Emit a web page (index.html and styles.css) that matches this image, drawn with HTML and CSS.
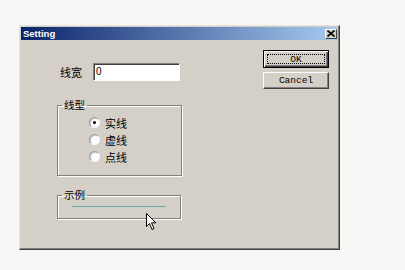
FILE: index.html
```html
<!DOCTYPE html>
<html>

<head>
    <meta charset='UTF-8'>
    <title>Setting</title>
    <link rel="stylesheet" href="styles.css">
</head>

<body>
    <div class='dialog'>
        <div class='title-bar'>
            <span class='title-text'>Setting</span>
            <span class='close-btn'>
                <svg width='8' height='7' viewBox='0 0 8 7'>
                    <path d='M0.5 0.5 L7.5 6.5 M7.5 0.5 L0.5 6.5' stroke='#000' stroke-width='1.6' />
                </svg>
            </span>
        </div>

        <div class='dialog-body'>
            <div class='left-col'>
                <!-- Line width -->
                <div class='field-row'>
                    <span class='field-label'>线宽</span>
                    <div class='text-input'>0</div>
                </div>

                <!-- Line type -->
                <fieldset class='group type-group'>
                    <legend>线型</legend>
                    <div class='radio-row'><span class='radio checked'></span><span>实线</span></div>
                    <div class='radio-row'><span class='radio'></span><span>虚线</span></div>
                    <div class='radio-row'><span class='radio'></span><span>点线</span></div>
                </fieldset>

                <!-- Preview -->
                <fieldset class='group sample-group'>
                    <legend>示例</legend>
                    <div class='sample-line'></div>
                </fieldset>
            </div>

            <div class='right-col'>
                <div class='btn default'><span class='focus-rect'>OK</span></div>
                <div class='btn'>Cancel</div>
            </div>
        </div>
    </div>

    <svg class='cursor' width='12' height='18' viewBox='0 0 12 18'>
        <path d='M0.5 0.5 L0.5 13.5 L3.5 10.5 L6 16.5 L8 15.5 L5.5 9.8 L9.8 9.8 Z' fill='#fff' stroke='#000' stroke-width='1' stroke-linejoin='miter' />
    </svg>
</body>

</html>
```

FILE: styles.css
```css
body {
    margin: 0;
    background-color: #f7f7f5;
    font-family: "Noto Sans CJK SC", "Liberation Sans", sans-serif;
    font-size: 11px;
    color: #000;
}

.dialog {
    width: 321px;
    height: 225px;
    margin: 25px 0 0 19px;
    box-sizing: border-box;
    padding: 1px;
    background: #d4d0c8;
    border: 1px solid;
    border-color: #e6e4de #404040 #404040 #e6e4de;
    box-shadow: inset -1px -1px 0 #808080;
}

.title-bar {
    height: 13px;
    display: flex;
    align-items: center;
    justify-content: space-between;
    padding: 0 1px 0 2px;
    background: linear-gradient(to right, #0a246a, #a6caf0);
}

.title-text {
    font-family: "Liberation Sans", Arial, sans-serif;
    font-weight: bold;
    font-size: 9.5px;
    color: #fff;
}

.close-btn {
    width: 12px;
    height: 10px;
    box-sizing: border-box;
    display: flex;
    align-items: center;
    justify-content: center;
    background: #d4d0c8;
    border: 1px solid;
    border-color: #fff #404040 #404040 #fff;
}

.dialog-body {
    display: flex;
}

.left-col {
    margin-left: 36px;
    padding-top: 23px;
}

.field-row {
    display: flex;
    align-items: center;
    height: 18px;
}

.field-label {
    margin-left: 3px;
    width: 33px;
    line-height: 12px;
}

.text-input {
    width: 87px;
    height: 18px;
    box-sizing: border-box;
    padding: 1px 0 0 2px;
    background: #fff;
    border: 1px solid;
    border-color: #808080 #fff #fff #808080;
    box-shadow: inset 1px 1px 0 #404040;
    font-family: "Liberation Sans", sans-serif;
    font-size: 10px;
    line-height: 13px;
}

.group {
    margin: 0;
    padding: 0;
    box-sizing: border-box;
    border: 1px solid #808080;
    box-shadow: inset 1px 1px 0 #fff, 1px 1px 0 #fff;
}

.group legend {
    margin-left: 4px;
    padding: 0 2px;
    font-size: 10.5px;
    line-height: 12px;
}

.type-group {
    width: 125px;
    margin-top: 18px;
    padding: 3px 0 10px;
}

.radio-row {
    display: flex;
    align-items: center;
    height: 17px;
    padding-left: 31px;
    line-height: 12px;
}

.radio {
    width: 11px;
    height: 11px;
    box-sizing: border-box;
    margin-right: 5px;
    border-radius: 50%;
    background: #fff;
    border: 1px solid;
    border-color: #9a9a9a #f4f4f4 #f4f4f4 #9a9a9a;
    box-shadow: inset 1px 1px 0 #c8c8c8;
    display: flex;
    align-items: center;
    justify-content: center;
}

.radio.checked::after {
    content: '';
    width: 3px;
    height: 3px;
    border-radius: 50%;
    background: #000;
}

.sample-group {
    width: 124px;
    height: 30px;
    margin-top: 13px;
    padding-top: 5px;
}

.sample-line {
    width: 94px;
    height: 1px;
    margin-left: 14px;
    background: #6aa8b0;
}

.right-col {
    margin-left: auto;
    margin-right: 9px;
    padding-top: 10px;
    display: flex;
    flex-direction: column;
    gap: 4px;
}

.btn {
    width: 66px;
    height: 17px;
    box-sizing: border-box;
    display: flex;
    align-items: center;
    justify-content: center;
    background: #d4d0c8;
    border: 1px solid;
    border-color: #fff #404040 #404040 #fff;
    box-shadow: inset -1px -1px 0 #808080;
    font-family: "Liberation Mono", monospace;
    font-size: 9.5px;
}

.btn.default {
    height: 18px;
    border: 1px solid #000;
    box-shadow: inset 1px 1px 0 #fff, inset -1px -1px 0 #404040, inset -2px -2px 0 #808080;
    padding: 3px;
}

.focus-rect {
    flex: 1;
    align-self: stretch;
    display: flex;
    align-items: center;
    justify-content: center;
    border: 1px dotted #000;
}

.cursor {
    position: absolute;
    left: 146px;
    top: 213px;
}
```
